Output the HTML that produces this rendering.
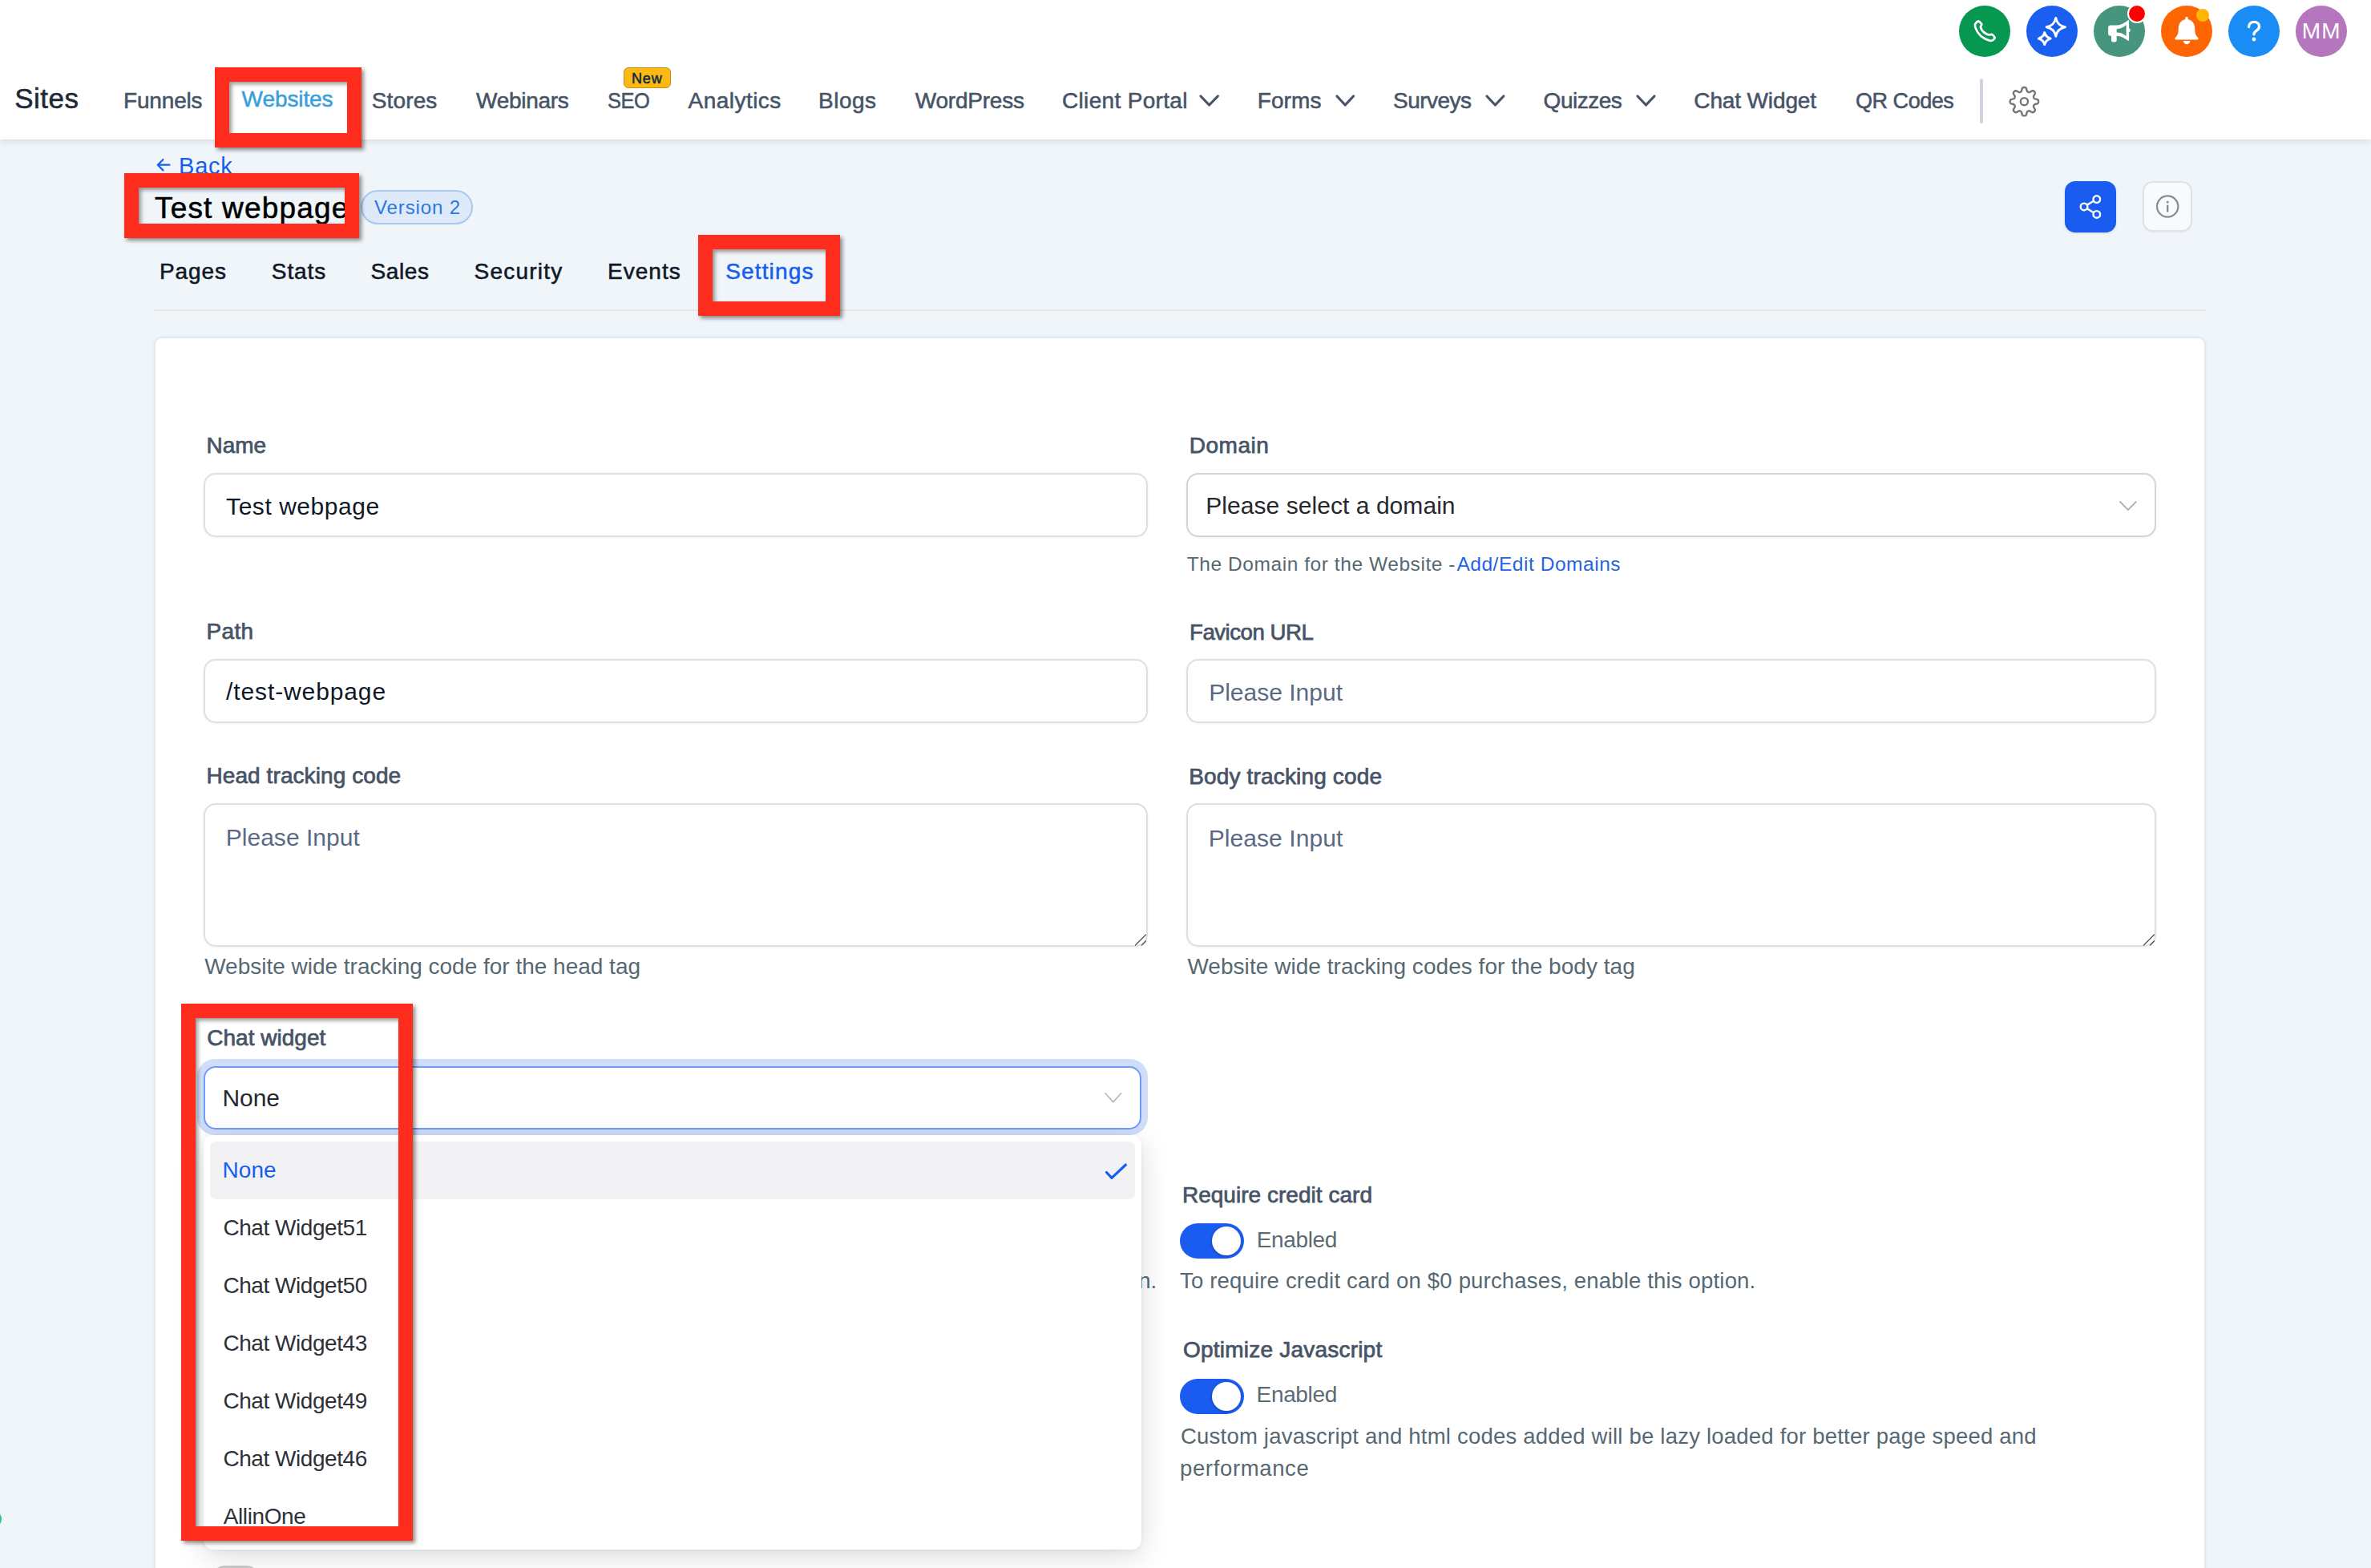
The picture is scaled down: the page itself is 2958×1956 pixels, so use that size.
<!DOCTYPE html>
<html><head><meta charset="utf-8"><style>
html,body{margin:0;padding:0;overflow:hidden}
body{width:2958px;height:1956px;overflow:hidden;background:#f0f5f9;position:relative;font-family:"Liberation Sans",sans-serif}
.t{position:absolute;white-space:pre;line-height:1;font-family:"Liberation Sans",sans-serif}
.a{position:absolute;overflow:visible}
.b{position:absolute;box-sizing:border-box}
.inp{position:absolute;box-sizing:border-box;border:2px solid #dedfe5;border-radius:15px;background:#fff;box-shadow:0 1px 3px rgba(16,24,40,.06)}
.circ{position:absolute;width:64px;height:64px;border-radius:50%}
.red{position:absolute;box-sizing:border-box;border:18px solid #fe2c1c;box-shadow:3px 3px 5px rgba(0,0,0,.45), inset 3px 3px 5px rgba(0,0,0,.4)}
.tog{position:absolute;width:80px;height:44px;border-radius:22px;background:#1a5cf0}
.tog::after{content:"";position:absolute;left:40px;top:4px;width:36px;height:36px;border-radius:50%;background:#fff;box-shadow:-1px 1px 3px rgba(0,0,0,.25)}
</style></head><body>

<div class="b" style="left:0;top:0;width:2958px;height:174px;background:#fff;box-shadow:0 2px 8px rgba(16,24,40,.12)"></div>
<div class="t" style="left:18.3px;top:105.4px;font-size:35px;color:#1d2939;letter-spacing:0.45px;-webkit-text-stroke:0.55px currentColor;">Sites</div>
<div class="t" style="left:154.0px;top:112.2px;font-size:28px;color:#475467;letter-spacing:-0.17px;-webkit-text-stroke:0.55px currentColor;">Funnels</div>
<div class="t" style="left:301.6px;top:109.7px;font-size:28px;color:#3b9fdb;letter-spacing:-0.09px;-webkit-text-stroke:0.55px currentColor;">Websites</div>
<div class="t" style="left:463.8px;top:111.7px;font-size:28px;color:#475467;letter-spacing:0.12px;-webkit-text-stroke:0.55px currentColor;">Stores</div>
<div class="t" style="left:594.0px;top:111.7px;font-size:28px;color:#475467;letter-spacing:-0.29px;-webkit-text-stroke:0.55px currentColor;">Webinars</div>
<div class="t" style="left:757.9px;top:111.7px;font-size:28px;color:#475467;letter-spacing:-0.50px;transform:scaleX(0.9071);transform-origin:0 0;-webkit-text-stroke:0.55px currentColor;">SEO</div>
<div class="t" style="left:858.5px;top:111.7px;font-size:28px;color:#475467;letter-spacing:0.47px;-webkit-text-stroke:0.55px currentColor;">Analytics</div>
<div class="t" style="left:1021.0px;top:111.7px;font-size:28px;color:#475467;letter-spacing:0.50px;-webkit-text-stroke:0.55px currentColor;">Blogs</div>
<div class="t" style="left:1141.8px;top:111.7px;font-size:28px;color:#475467;letter-spacing:-0.23px;-webkit-text-stroke:0.55px currentColor;">WordPress</div>
<div class="t" style="left:1325.0px;top:111.7px;font-size:28px;color:#475467;letter-spacing:0.33px;-webkit-text-stroke:0.55px currentColor;">Client Portal</div>
<div class="t" style="left:1568.7px;top:111.7px;font-size:28px;color:#475467;letter-spacing:0.12px;-webkit-text-stroke:0.55px currentColor;">Forms</div>
<div class="t" style="left:1737.9px;top:111.7px;font-size:28px;color:#475467;letter-spacing:-0.50px;transform:scaleX(0.9979);transform-origin:0 0;-webkit-text-stroke:0.55px currentColor;">Surveys</div>
<div class="t" style="left:1925.6px;top:111.7px;font-size:28px;color:#475467;letter-spacing:-0.48px;-webkit-text-stroke:0.55px currentColor;">Quizzes</div>
<div class="t" style="left:2113.3px;top:111.7px;font-size:28px;color:#475467;letter-spacing:-0.13px;-webkit-text-stroke:0.55px currentColor;">Chat Widget</div>
<div class="t" style="left:2314.5px;top:111.7px;font-size:28px;color:#475467;letter-spacing:-0.50px;transform:scaleX(0.9657);transform-origin:0 0;-webkit-text-stroke:0.55px currentColor;">QR Codes</div>
<div class="b" style="left:778px;top:84px;width:59px;height:25.5px;background:#fdb913;border:1.5px solid #c69008;border-radius:6px"></div>
<div class="t" style="left:788.0px;top:88.7px;font-size:18px;color:#102a43;letter-spacing:0.85px;-webkit-text-stroke:0.55px currentColor;">New</div>
<svg class="a" style="left:1494.4px;top:115.5px" width="29.3" height="19.0"><polyline points="4,4 14.6,15.0 25.3,4" fill="none" stroke="#475467" stroke-width="3.2" stroke-linecap="round" stroke-linejoin="round"/></svg>
<svg class="a" style="left:1663.5px;top:115.5px" width="28.5" height="19.0"><polyline points="4,4 14.2,15.0 24.5,4" fill="none" stroke="#475467" stroke-width="3.2" stroke-linecap="round" stroke-linejoin="round"/></svg>
<svg class="a" style="left:1850.6px;top:115.5px" width="28.8" height="19.0"><polyline points="4,4 14.4,15.0 24.8,4" fill="none" stroke="#475467" stroke-width="3.2" stroke-linecap="round" stroke-linejoin="round"/></svg>
<svg class="a" style="left:2039.0px;top:115.5px" width="28.9" height="19.0"><polyline points="4,4 14.5,15.0 24.9,4" fill="none" stroke="#475467" stroke-width="3.2" stroke-linecap="round" stroke-linejoin="round"/></svg>
<div class="b" style="left:2470px;top:98px;width:4px;height:56px;background:#d0d5dd;border-radius:2px"></div>
<svg class="a" style="left:0;top:0" width="2958" height="174"><path d="M2543.10,126.70 L2543.08,127.16 L2543.02,127.62 L2542.90,128.08 L2542.69,128.52 L2542.33,128.93 L2541.73,129.29 L2540.89,129.57 L2539.92,129.79 L2539.08,129.98 L2538.47,130.20 L2538.07,130.45 L2537.80,130.73 L2537.61,131.02 L2537.45,131.33 L2537.32,131.64 L2537.20,131.95 L2537.09,132.28 L2537.02,132.62 L2537.01,133.00 L2537.11,133.46 L2537.39,134.05 L2537.85,134.79 L2538.38,135.62 L2538.78,136.42 L2538.94,137.09 L2538.91,137.64 L2538.75,138.10 L2538.51,138.51 L2538.23,138.88 L2537.92,139.22 L2537.58,139.53 L2537.21,139.81 L2536.80,140.05 L2536.34,140.21 L2535.79,140.24 L2535.12,140.08 L2534.32,139.68 L2533.49,139.15 L2532.75,138.69 L2532.16,138.41 L2531.70,138.31 L2531.32,138.32 L2530.98,138.39 L2530.65,138.50 L2530.34,138.62 L2530.03,138.75 L2529.72,138.91 L2529.43,139.10 L2529.15,139.37 L2528.90,139.77 L2528.68,140.38 L2528.49,141.22 L2528.27,142.19 L2527.99,143.03 L2527.63,143.63 L2527.22,143.99 L2526.78,144.20 L2526.32,144.32 L2525.86,144.38 L2525.40,144.40 L2524.94,144.38 L2524.48,144.32 L2524.02,144.20 L2523.58,143.99 L2523.17,143.63 L2522.81,143.03 L2522.53,142.19 L2522.31,141.22 L2522.12,140.38 L2521.90,139.77 L2521.65,139.37 L2521.37,139.10 L2521.08,138.91 L2520.77,138.75 L2520.46,138.62 L2520.15,138.50 L2519.82,138.39 L2519.48,138.32 L2519.10,138.31 L2518.64,138.41 L2518.05,138.69 L2517.31,139.15 L2516.48,139.68 L2515.68,140.08 L2515.01,140.24 L2514.46,140.21 L2514.00,140.05 L2513.59,139.81 L2513.22,139.53 L2512.88,139.22 L2512.57,138.88 L2512.29,138.51 L2512.05,138.10 L2511.89,137.64 L2511.86,137.09 L2512.02,136.42 L2512.42,135.62 L2512.95,134.79 L2513.41,134.05 L2513.69,133.46 L2513.79,133.00 L2513.78,132.62 L2513.71,132.28 L2513.60,131.95 L2513.48,131.64 L2513.35,131.33 L2513.19,131.02 L2513.00,130.73 L2512.73,130.45 L2512.33,130.20 L2511.72,129.98 L2510.88,129.79 L2509.91,129.57 L2509.07,129.29 L2508.47,128.93 L2508.11,128.52 L2507.90,128.08 L2507.78,127.62 L2507.72,127.16 L2507.70,126.70 L2507.72,126.24 L2507.78,125.78 L2507.90,125.32 L2508.11,124.88 L2508.47,124.47 L2509.07,124.11 L2509.91,123.83 L2510.88,123.61 L2511.72,123.42 L2512.33,123.20 L2512.73,122.95 L2513.00,122.67 L2513.19,122.38 L2513.35,122.07 L2513.48,121.76 L2513.60,121.45 L2513.71,121.12 L2513.78,120.78 L2513.79,120.40 L2513.69,119.94 L2513.41,119.35 L2512.95,118.61 L2512.42,117.78 L2512.02,116.98 L2511.86,116.31 L2511.89,115.76 L2512.05,115.30 L2512.29,114.89 L2512.57,114.52 L2512.88,114.18 L2513.22,113.87 L2513.59,113.59 L2514.00,113.35 L2514.46,113.19 L2515.01,113.16 L2515.68,113.32 L2516.48,113.72 L2517.31,114.25 L2518.05,114.71 L2518.64,114.99 L2519.10,115.09 L2519.48,115.08 L2519.82,115.01 L2520.15,114.90 L2520.46,114.78 L2520.77,114.65 L2521.08,114.49 L2521.37,114.30 L2521.65,114.03 L2521.90,113.63 L2522.12,113.02 L2522.31,112.18 L2522.53,111.21 L2522.81,110.37 L2523.17,109.77 L2523.58,109.41 L2524.02,109.20 L2524.48,109.08 L2524.94,109.02 L2525.40,109.00 L2525.86,109.02 L2526.32,109.08 L2526.78,109.20 L2527.22,109.41 L2527.63,109.77 L2527.99,110.37 L2528.27,111.21 L2528.49,112.18 L2528.68,113.02 L2528.90,113.63 L2529.15,114.03 L2529.43,114.30 L2529.72,114.49 L2530.03,114.65 L2530.34,114.78 L2530.65,114.90 L2530.98,115.01 L2531.32,115.08 L2531.70,115.09 L2532.16,114.99 L2532.75,114.71 L2533.49,114.25 L2534.32,113.72 L2535.12,113.32 L2535.79,113.16 L2536.34,113.19 L2536.80,113.35 L2537.21,113.59 L2537.58,113.87 L2537.92,114.18 L2538.23,114.52 L2538.51,114.89 L2538.75,115.30 L2538.91,115.76 L2538.94,116.31 L2538.78,116.98 L2538.38,117.78 L2537.85,118.61 L2537.39,119.35 L2537.11,119.94 L2537.01,120.40 L2537.02,120.78 L2537.09,121.12 L2537.20,121.45 L2537.32,121.76 L2537.45,122.07 L2537.61,122.38 L2537.80,122.67 L2538.07,122.95 L2538.47,123.20 L2539.08,123.42 L2539.92,123.61 L2540.89,123.83 L2541.73,124.11 L2542.33,124.47 L2542.69,124.88 L2542.90,125.32 L2543.02,125.78 L2543.08,126.24Z" fill="none" stroke="#757575" stroke-width="2.4" stroke-linejoin="round"/><circle cx="2525.4" cy="126.7" r="4.6" fill="none" stroke="#757575" stroke-width="2.4"/></svg>
<div class="circ" style="left:2444px;top:7px;background:#069750"></div>
<div class="circ" style="left:2528px;top:7px;background:#1a5ff0"></div>
<div class="circ" style="left:2612px;top:7px;background:#46957e"></div>
<div class="circ" style="left:2696px;top:7px;background:#fe6603"></div>
<div class="circ" style="left:2780px;top:7px;background:#1a8cf5"></div>
<div class="circ" style="left:2864px;top:7px;background:#b576be"></div>
<div class="b" style="left:2653.9px;top:4.6px;width:24.2px;height:24.2px;border-radius:50%;background:#ff0000;border:2.1px solid #fff"></div>
<div class="b" style="left:2740px;top:11px;width:16px;height:16px;border-radius:50%;background:#ffb703"></div>
<svg class="a" style="left:0;top:0" width="2958" height="80">
<path d="M2470.9,33.4 L2472.4,30.4 Q2470.6,27.2 2468.3,26.4 Q2465.6,27.2 2464.3,29.8 Q2463.5,32.2 2464.5,34.6 Q2466.9,41 2471.4,45.1 Q2476,48.7 2482.4,50.7 Q2485.1,51.1 2486.8,49.8 L2488.8,47.1 Q2487.3,44.2 2485.2,42.8 L2481.3,43.5 Q2476.2,42.3 2472.9,38.2 Q2471.5,36.1 2470.9,33.4 Z" fill="none" stroke="#fff" stroke-width="2.7" stroke-linejoin="round"/>
<path d="M2564.8,22.4 C2566.2,29 2569.2,32.2 2576.4,33.8 C2569.2,35.4 2566.2,38.6 2564.8,45.3 C2563.4,38.6 2560.4,35.4 2553.2,33.8 C2560.4,32.2 2563.4,29 2564.8,22.4 Z" fill="none" stroke="#fff" stroke-width="3" stroke-linejoin="round"/>
<path d="M2550.8,40.6 C2551.7,44.6 2553.6,46.6 2558.2,48.1 C2553.6,49.6 2551.7,51.6 2550.8,55.6 C2549.9,51.6 2548,49.6 2543.4,48.1 C2548,46.6 2549.9,44.6 2550.8,40.6 Z" fill="none" stroke="#fff" stroke-width="3" stroke-linejoin="round"/>
<path d="M2633.3,32.3 h7.6 c6,0 9.6,-3 14.5,-6.6 v24.6 c-4.9,-3.6 -8.9,-6.2 -14.5,-6.2 h-7.6 q-2.5,0 -2.5,-2.5 v-6.8 q0,-2.5 2.5,-2.5 z" fill="#fff" stroke="#fff" stroke-width="1.4" stroke-linejoin="round"/>
<path d="M2640.7,36.3 c5,-0.3 8,-2 11.9,-5.3 v13.9 c-3.9,-3.2 -6.9,-4.5 -11.9,-4.5 z" fill="#46957e"/>
<rect x="2634" y="42" width="6.7" height="10.6" rx="2.4" fill="#fff"/>
<path d="M2655.5,35 c1.6,0.3 2.2,1.5 2.2,2.8 c0,1.3 -0.6,2.5 -2.2,2.8 z" fill="#fff"/>
<path d="M2728,21 c1.2,0 1.8,0.8 1.8,1.8 v1.4 c5.2,1 8.4,5.4 8.4,11 c0,4.6 0.6,7.4 2,9.4 l2.2,3 c0.6,0.9 0.2,1.9 -0.9,1.9 h-27 c-1.1,0 -1.5,-1 -0.9,-1.9 l2.2,-3 c1.4,-2 2,-4.8 2,-9.4 c0,-5.6 3.2,-10 8.4,-11 v-1.4 c0,-1 0.6,-1.8 1.8,-1.8 z" fill="#fff"/>
<path d="M2723.8,51 h8.6 c-0.4,2.4 -2.2,4.3 -4.3,4.3 c-2.1,0 -3.9,-1.9 -4.3,-4.3 z" fill="#fff"/>
<path d="M2805.6,33.6 c0,-3.8 2.8,-6.2 6.6,-6.2 c3.8,0 6.4,2.4 6.4,5.6 c0,2.8 -1.8,4.2 -4,5.6 c-1.8,1.2 -2.6,2.2 -2.6,4.2" fill="none" stroke="#fff" stroke-width="3.4" stroke-linecap="round"/>
<circle cx="2812" cy="49" r="2.4" fill="#fff"/>
</svg>
<div class="t" style="left:2871.7px;top:25.1px;font-size:28px;color:#ffffff;letter-spacing:1.30px;">MM</div>
<svg class="a" style="left:0;top:0" width="300" height="230"><path d="M211.5,205.7 H197 M203.5,199 L196.8,205.7 L203.5,212.4" fill="none" stroke="#155eef" stroke-width="2.2" stroke-linecap="round" stroke-linejoin="round"/></svg>
<div class="t" style="left:223.0px;top:192.8px;font-size:29px;color:#155eef;letter-spacing:0.80px;">Back</div>
<div class="t" style="left:193.0px;top:241.1px;font-size:37px;color:#000000;letter-spacing:1.18px;-webkit-text-stroke:0.55px currentColor;">Test webpage</div>
<div class="b" style="left:450.3px;top:236.7px;width:139.5px;height:43px;border-radius:22px;background:#deeafa;border:2px solid #a9c8f1"></div>
<div class="t" style="left:467.0px;top:246.6px;font-size:24px;color:#2a78de;letter-spacing:0.88px;">Version 2</div>
<div class="b" style="left:2576px;top:226px;width:64px;height:64px;border-radius:13px;background:#1a5cf0;box-shadow:0 1px 3px rgba(16,24,40,.12)"></div>
<svg class="a" style="left:2576px;top:226px" width="64" height="64"><g fill="none" stroke="#fff" stroke-width="2.4"><circle cx="39.8" cy="22.6" r="4.3"/><circle cx="24" cy="31.9" r="4.3"/><circle cx="39.8" cy="41.4" r="4.3"/><path d="M27.8,29.6 L36,24.8 M27.8,34.2 L36,39.2"/></g></svg>
<div class="b" style="left:2672.6px;top:226.4px;width:62px;height:63px;border-radius:13px;background:#f9fafb;border:2px solid #dfe2e7;box-shadow:0 1px 2px rgba(16,24,40,.05)"></div>
<svg class="a" style="left:2672.6px;top:226.4px" width="62" height="63"><circle cx="31.2" cy="31.5" r="13.2" fill="none" stroke="#858c94" stroke-width="2.2"/><circle cx="31.2" cy="26.2" r="1.4" fill="#858c94"/><path d="M31.2,30.6 V37.6" stroke="#858c94" stroke-width="2.4" stroke-linecap="round"/></svg>
<div class="t" style="left:199.0px;top:325.0px;font-size:28px;color:#101828;letter-spacing:0.88px;-webkit-text-stroke:0.55px currentColor;">Pages</div>
<div class="t" style="left:338.8px;top:325.0px;font-size:28px;color:#101828;letter-spacing:0.93px;-webkit-text-stroke:0.55px currentColor;">Stats</div>
<div class="t" style="left:462.6px;top:325.0px;font-size:28px;color:#101828;letter-spacing:0.60px;-webkit-text-stroke:0.55px currentColor;">Sales</div>
<div class="t" style="left:591.6px;top:325.0px;font-size:28px;color:#101828;letter-spacing:1.20px;-webkit-text-stroke:0.55px currentColor;">Security</div>
<div class="t" style="left:758.0px;top:325.0px;font-size:28px;color:#101828;letter-spacing:1.04px;-webkit-text-stroke:0.55px currentColor;">Events</div>
<div class="t" style="left:905.3px;top:325.0px;font-size:28px;color:#155eef;letter-spacing:1.13px;-webkit-text-stroke:0.55px currentColor;">Settings</div>
<div class="b" style="left:192px;top:386px;width:2560px;height:1.5px;background:#e7e6eb"></div>
<div class="b" style="left:192px;top:420px;width:2560px;height:1700px;background:#fff;border:2px solid #e5e8ec;border-radius:10px;box-shadow:0 1px 4px rgba(16,24,40,.06)"></div>
<div class="inp" style="left:254px;top:590px;width:1178px;height:79.5px"></div>
<div class="inp" style="left:1480px;top:590px;width:1210px;height:79.5px;border-color:#cfd5de"></div>
<div class="inp" style="left:254px;top:822px;width:1178px;height:79.5px"></div>
<div class="inp" style="left:1480px;top:822px;width:1210px;height:79.5px"></div>
<div class="inp" style="left:254px;top:1002px;width:1178px;height:178.5px"></div>
<div class="inp" style="left:1480px;top:1002px;width:1210px;height:178.5px"></div>
<svg class="a" style="left:2641.0px;top:621.5px" width="27.8" height="18.0"><polyline points="4,4 13.9,14.0 23.8,4" fill="none" stroke="#b2b2b2" stroke-width="1.8" stroke-linecap="round" stroke-linejoin="round"/></svg>
<svg class="a" style="left:1412px;top:1160.5px" width="20" height="20"><path d="M4.5,18 L17.5,5 M12.5,18 L17.5,13" stroke="#555" stroke-width="1.3" stroke-linecap="round"/></svg>
<svg class="a" style="left:2670px;top:1160.5px" width="20" height="20"><path d="M4.5,18 L17.5,5 M12.5,18 L17.5,13" stroke="#555" stroke-width="1.3" stroke-linecap="round"/></svg>
<div class="t" style="left:257.5px;top:542.2px;font-size:28px;color:#475467;letter-spacing:0.00px;-webkit-text-stroke:0.75px currentColor;">Name</div>
<div class="t" style="left:1483.8px;top:541.9px;font-size:28px;color:#475467;letter-spacing:0.50px;-webkit-text-stroke:0.75px currentColor;">Domain</div>
<div class="t" style="left:257.5px;top:774.4px;font-size:28px;color:#475467;letter-spacing:0.33px;-webkit-text-stroke:0.75px currentColor;">Path</div>
<div class="t" style="left:1483.8px;top:774.5px;font-size:28px;color:#475467;letter-spacing:-0.50px;transform:scaleX(0.9877);transform-origin:0 0;-webkit-text-stroke:0.75px currentColor;">Favicon URL</div>
<div class="t" style="left:257.5px;top:954.4px;font-size:28px;color:#475467;letter-spacing:0.08px;-webkit-text-stroke:0.75px currentColor;">Head tracking code</div>
<div class="t" style="left:1483.2px;top:954.7px;font-size:28px;color:#475467;letter-spacing:0.16px;-webkit-text-stroke:0.75px currentColor;">Body tracking code</div>
<div class="t" style="left:258.3px;top:1281.3px;font-size:28px;color:#475467;letter-spacing:0.01px;-webkit-text-stroke:0.75px currentColor;">Chat widget</div>
<div class="t" style="left:1474.9px;top:1477.4px;font-size:28px;color:#475467;letter-spacing:0.03px;-webkit-text-stroke:0.75px currentColor;">Require credit card</div>
<div class="t" style="left:1476.1px;top:1670.4px;font-size:28px;color:#475467;letter-spacing:0.21px;-webkit-text-stroke:0.75px currentColor;">Optimize Javascript</div>
<div class="t" style="left:282.1px;top:616.5px;font-size:30px;color:#101828;letter-spacing:0.54px;">Test webpage</div>
<div class="t" style="left:1504.3px;top:616.3px;font-size:30px;color:#25282d;letter-spacing:0.05px;">Please select a domain</div>
<div class="t" style="left:282.0px;top:848.3px;font-size:30px;color:#101828;letter-spacing:0.89px;">/test-webpage</div>
<div class="t" style="left:1508.2px;top:849.4px;font-size:30px;color:#5b6a84;letter-spacing:0.00px;">Please Input</div>
<div class="t" style="left:281.7px;top:1030.3px;font-size:30px;color:#5b6a84;letter-spacing:0.03px;">Please Input</div>
<div class="t" style="left:1507.7px;top:1030.6px;font-size:30px;color:#5b6a84;letter-spacing:0.07px;">Please Input</div>
<div class="t" style="left:1480.8px;top:692.2px;font-size:24.5px;color:#566872;letter-spacing:0.56px;">The Domain for the Website -</div>
<div class="t" style="left:1817.4px;top:692.2px;font-size:24.5px;color:#1f63e6;letter-spacing:0.54px;">Add/Edit Domains</div>
<div class="t" style="left:255.2px;top:1192.2px;font-size:28px;color:#566872;letter-spacing:-0.01px;">Website wide tracking code for the head tag</div>
<div class="t" style="left:1481.4px;top:1191.7px;font-size:28px;color:#566872;letter-spacing:0.04px;">Website wide tracking codes for the body tag</div>
<div class="b" style="left:246px;top:1321px;width:1186px;height:95px;border-radius:22px;background:#cfddfb"></div>
<div class="b" style="left:254px;top:1329.5px;width:1170px;height:79px;border-radius:15px;background:#fff;border:2px solid #6f9cf6"></div>
<svg class="a" style="left:1375.0px;top:1360.0px" width="27.6" height="18.6"><polyline points="4,4 13.8,14.6 23.6,4" fill="none" stroke="#b8b8b8" stroke-width="1.8" stroke-linecap="round" stroke-linejoin="round"/></svg>
<div class="t" style="left:277.5px;top:1354.5px;font-size:30px;color:#25282d;letter-spacing:-0.07px;">None</div>
<div class="tog" style="left:1472px;top:1526px"></div>
<div class="tog" style="left:1472px;top:1720px"></div>
<div class="t" style="left:1567.8px;top:1533.2px;font-size:28px;color:#5b6b75;letter-spacing:-0.38px;">Enabled</div>
<div class="t" style="left:1472.0px;top:1584.4px;font-size:27.5px;color:#566872;letter-spacing:0.18px;">To require credit card on $0 purchases, enable this option.</div>
<div class="t" style="left:1405.0px;top:1584.4px;font-size:27.5px;color:#566872;letter-spacing:0.00px;">on.</div>
<div class="t" style="left:1567.6px;top:1726.4px;font-size:28px;color:#5b6b75;letter-spacing:-0.35px;">Enabled</div>
<div class="t" style="left:1473.0px;top:1778.1px;font-size:27.5px;color:#566872;letter-spacing:0.21px;">Custom javascript and html codes added will be lazy loaded for better page speed and</div>
<div class="t" style="left:1472.0px;top:1817.9px;font-size:27.5px;color:#566872;letter-spacing:0.64px;">performance</div>
<div class="b" style="left:264.5px;top:1953px;width:58.5px;height:30px;border-radius:15px;background:#cacaca"></div>
<div class="b" style="left:-20px;top:1884px;width:22px;height:22px;border-radius:50%;background:#2cc28b"></div>
<div class="b" style="left:254px;top:1416px;width:1170px;height:517px;border-radius:12px;background:#fff;box-shadow:0 8px 36px rgba(0,0,0,.14), 0 2px 6px rgba(0,0,0,.05)"></div>
<div class="b" style="left:262px;top:1424px;width:1154px;height:72px;border-radius:7px;background:#f2f2f5"></div>
<svg class="a" style="left:1370px;top:1445px" width="45" height="35"><polyline points="10.5,17.5 17,24.3 34.4,8" fill="none" stroke="#155eef" stroke-width="3.2" stroke-linecap="round" stroke-linejoin="round"/></svg>
<div class="t" style="left:277.6px;top:1446.3px;font-size:28px;color:#155eef;letter-spacing:0.03px;">None</div>
<div class="t" style="left:278.4px;top:1518.2px;font-size:28px;color:#2d3138;letter-spacing:-0.45px;">Chat Widget51</div>
<div class="t" style="left:278.4px;top:1590.2px;font-size:28px;color:#2d3138;letter-spacing:-0.45px;">Chat Widget50</div>
<div class="t" style="left:278.4px;top:1662.2px;font-size:28px;color:#2d3138;letter-spacing:-0.45px;">Chat Widget43</div>
<div class="t" style="left:278.4px;top:1734.2px;font-size:28px;color:#2d3138;letter-spacing:-0.45px;">Chat Widget49</div>
<div class="t" style="left:278.4px;top:1806.2px;font-size:28px;color:#2d3138;letter-spacing:-0.45px;">Chat Widget46</div>
<div class="t" style="left:278.7px;top:1878.2px;font-size:28px;color:#2d3138;letter-spacing:-0.39px;">AllinOne</div>
<div class="red" style="left:267.6px;top:84.3px;width:183.2px;height:99.3px"></div>
<div class="red" style="left:154.8px;top:216.0px;width:293.2px;height:81.2px"></div>
<div class="red" style="left:871.1px;top:293.2px;width:176.9px;height:100.6px"></div>
<div class="red" style="left:226.0px;top:1252.0px;width:289.0px;height:670.0px"></div>
</body></html>
